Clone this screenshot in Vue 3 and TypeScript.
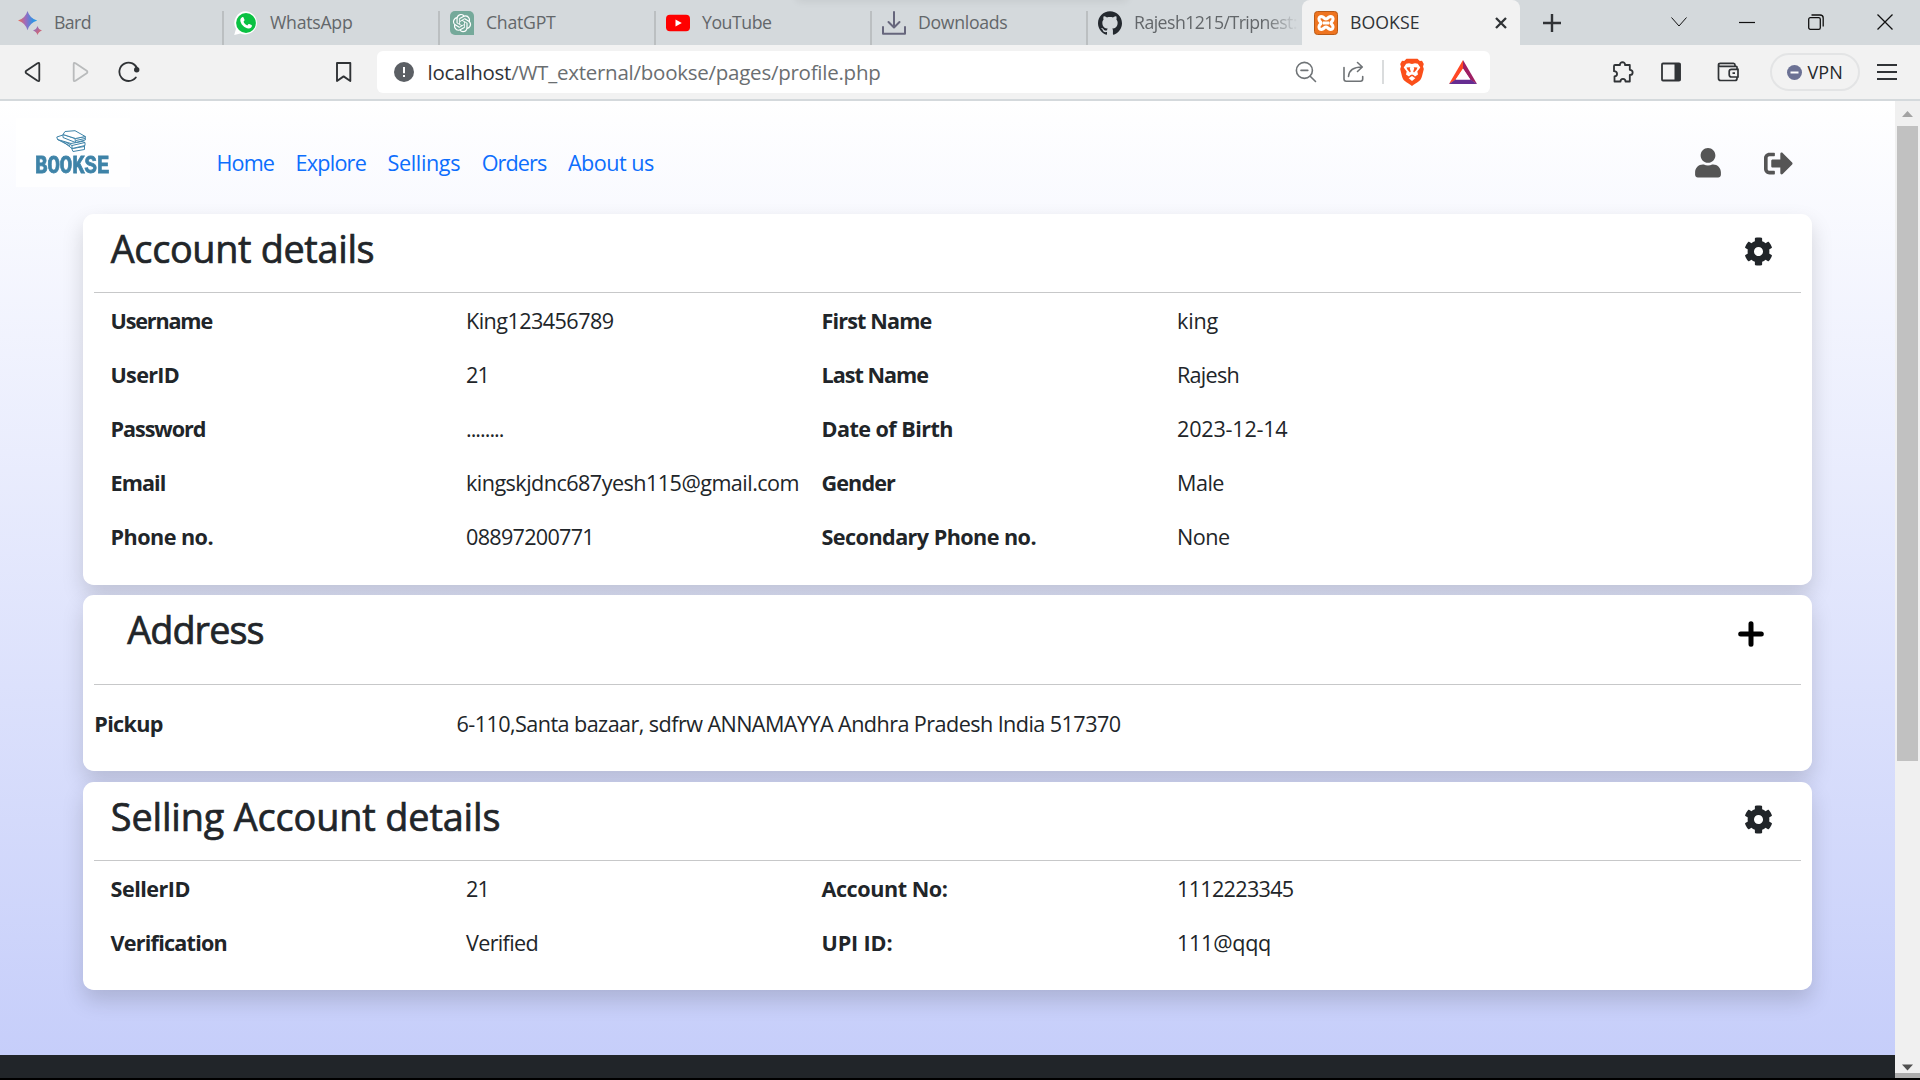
<script setup lang="ts">
import type { Directive } from 'vue'

interface Text {
  text: string
  width: number
}

interface Row {
  cells: Text[]
}

const t = (text: string, width: number): Text => ({ text, width })

// Adjusts tracking so that a label occupies the given measure.
const applyFit = (el: HTMLElement, width: number) => {
  el.style.letterSpacing = '0px'
  const natural = el.getBoundingClientRect().width
  const count = (el.textContent ?? '').length
  if (count > 0) el.style.letterSpacing = `${(width - natural) / count}px`
}

const vFit: Directive<HTMLElement, number> = {
  mounted(el, binding) {
    applyFit(el, binding.value)
    document.fonts.ready.then(() => applyFit(el, binding.value))
  },
}

const links: Text[] = [
  t('Home', 57.5),
  t('Explore', 70.4),
  t('Sellings', 72.5),
  t('Orders', 64.6),
  t('About us', 86),
]

const account: Row[] = [
  { cells: [t('Username', 101.5), t('King123456789', 147.5), t('First Name', 110), t('king', 41)] },
  { cells: [t('UserID', 68.5), t('21', 23), t('Last Name', 106.5), t('Rajesh', 62)] },
  { cells: [t('Password', 95), t('........', 37.5), t('Date of Birth', 131.5), t('2023-12-14', 110.5)] },
  { cells: [t('Email', 55), t('kingskjdnc687yesh115@gmail.com', 333), t('Gender', 73.5), t('Male', 47)] },
  { cells: [t('Phone no.', 102.5), t('08897200771', 128), t('Secondary Phone no.', 214.5), t('None', 52.5)] },
]

const selling: Row[] = [
  { cells: [t('SellerID', 79.5), t('21', 23), t('Account No:', 126), t('1112223345', 116.5)] },
  { cells: [t('Verification', 116.5), t('Verified', 72), t('UPI ID:', 71), t('111@qqq', 94)] },
]

const cog =
  'M487.4 315.7l-42.6-24.6c4.3-23.2 4.3-47 0-70.2l42.6-24.6c4.9-2.8 7.1-8.6 5.5-14-11.1-35.6-30-67.8-54.7-94.6-3.8-4.1-10-5.1-14.8-2.3L380.8 110c-17.9-15.4-38.5-27.3-60.8-35.1V25.8c0-5.6-3.9-10.5-9.4-11.7-36.7-8.2-74.3-7.8-109.2 0-5.5 1.2-9.4 6.1-9.4 11.7V75c-22.2 7.9-42.8 19.8-60.8 35.1L88.7 85.5c-4.9-2.8-11-1.9-14.8 2.3-24.7 26.7-43.6 58.9-54.7 94.6-1.7 5.4.6 11.2 5.5 14L67.3 221c-4.3 23.2-4.3 47 0 70.2l-42.6 24.6c-4.9 2.8-7.1 8.6-5.5 14 11.1 35.6 30 67.8 54.7 94.6 3.8 4.1 10 5.1 14.8 2.3l42.6-24.6c17.9 15.4 38.5 27.3 60.8 35.1v49.2c0 5.6 3.9 10.5 9.4 11.7 36.7 8.2 74.3 7.8 109.2 0 5.5-1.2 9.4-6.1 9.4-11.7v-49.2c22.2-7.9 42.8-19.8 60.8-35.1l42.6 24.6c4.9 2.8 11 1.9 14.8-2.3 24.7-26.7 43.6-58.9 54.7-94.6 1.5-5.5-.7-11.3-5.6-14.1zM256 336c-44.1 0-80-35.9-80-80s35.9-80 80-80 80 35.9 80 80-35.9 80-80 80z'
</script>

<template>
  <div class="window">
    <header class="tabs">
      <div class="tab first">
        <svg class="favicon" viewBox="0 0 24 24">
          <defs>
            <linearGradient id="bard" x1="0" y1="0" x2="1" y2="0">
              <stop offset="0" stop-color="#ee6a50" />
              <stop offset=".4" stop-color="#9a6cc0" />
              <stop offset=".75" stop-color="#3b8de0" />
              <stop offset="1" stop-color="#1fa2e8" />
            </linearGradient>
            <linearGradient id="bard2" x1="0" y1="0" x2="1" y2="1">
              <stop offset="0" stop-color="#7a70d8" />
              <stop offset="1" stop-color="#f06450" />
            </linearGradient>
          </defs>
          <path fill="url(#bard)" d="M9.5 0Q11.7 7.300 19.200 9.600Q11.700 11.900 9.500 19.300Q7.300 11.900 0 9.600Q7.300 7.300 9.500 0Z" />
          <path fill="url(#bard2)" d="M19.500 15Q20.500 18.500 24 19.500Q20.500 20.500 19.500 24Q18.500 20.500 15 19.500Q18.500 18.500 19.500 15Z" />
        </svg>
        <span v-fit="37" class="tab-title">Bard</span>
      </div>
      <div class="tab">
        <svg class="favicon" viewBox="0 0 24 24">
          <path fill="#fff" d="M12 .3A11.600 11.600 0 0 0 2 17.800L.2 24l6.200-1.600A11.600 11.600 0 1 0 12 .3Z" />
          <circle cx="12" cy="12" r="9.900" fill="#0ac142" />
          <path fill="#fff" d="M8.200 6.200c.4-.2 1-.2 1.300.3l1 2.300c.1.400 0 .700-.2 1l-.8 1c.8 1.700 2 2.800 3.800 3.600l1-1.200c.3-.3.600-.4 1-.2l2.200 1.100c.4.200.5.5.4 1-.3 1.600-1.600 2.500-3.200 2.400-4.500-.6-8.200-4.500-8.400-8.300 0-1.300.8-2.400 1.900-3Z" />
        </svg>
        <span v-fit="82.5" class="tab-title">WhatsApp</span>
      </div>
      <div class="tab">
        <svg class="favicon" viewBox="0 0 24 24">
          <path fill="#75a99a" d="M5 0H19A5 5 0 0 1 24 5V24H5A5 5 0 0 1 0 19V5A5 5 0 0 1 5 0Z" />
          <path
            fill="#fff"
            transform="translate(2.900 2.900) scale(.76)"
            d="M22.2819 9.8211a5.9847 5.9847 0 0 0-.5157-4.9108 6.0462 6.0462 0 0 0-6.5098-2.9A6.0651 6.0651 0 0 0 4.9807 4.1818a5.9847 5.9847 0 0 0-3.9977 2.9 6.0462 6.0462 0 0 0 .7427 7.0966 5.98 5.98 0 0 0 .511 4.9107 6.051 6.051 0 0 0 6.5146 2.9001A5.9847 5.9847 0 0 0 13.2599 24a6.0557 6.0557 0 0 0 5.7718-4.2058 5.9894 5.9894 0 0 0 3.9977-2.9001 6.0557 6.0557 0 0 0-.7475-7.0729zm-9.022 12.6081a4.4755 4.4755 0 0 1-2.8764-1.0408l.1419-.0804 4.7783-2.7582a.7948.7948 0 0 0 .3927-.6813v-6.7369l2.02 1.1686a.071.071 0 0 1 .038.052v5.5826a4.504 4.504 0 0 1-4.4945 4.4944zm-9.6607-4.1254a4.4708 4.4708 0 0 1-.5346-3.0137l.142.0852 4.783 2.7582a.7712.7712 0 0 0 .7806 0l5.8428-3.3685v2.3324a.0804.0804 0 0 1-.0332.0615L9.74 19.9502a4.4992 4.4992 0 0 1-6.1408-1.6464zM2.3408 7.8956a4.485 4.485 0 0 1 2.3655-1.9728V11.6a.7664.7664 0 0 0 .3879.6765l5.8144 3.3543-2.0201 1.1685a.0757.0757 0 0 1-.071 0l-4.8303-2.7865A4.504 4.504 0 0 1 2.3408 7.872zm16.5963 3.8558L13.1038 8.364 15.1192 7.2a.0757.0757 0 0 1 .071 0l4.8303 2.7913a4.4944 4.4944 0 0 1-.6765 8.1042v-5.6772a.79.79 0 0 0-.407-.667zm2.0107-3.0231l-.142-.0852-4.7735-2.7818a.7759.7759 0 0 0-.7854 0L9.409 9.2297V6.8974a.0662.0662 0 0 1 .0284-.0615l4.8303-2.7866a4.4992 4.4992 0 0 1 6.6802 4.66zM8.3065 12.863l-2.02-1.1638a.0804.0804 0 0 1-.038-.0567V6.0742a4.4992 4.4992 0 0 1 7.3757-3.4537l-.142.0805L8.704 5.459a.7948.7948 0 0 0-.3927.6813zm1.0976-2.3654l2.602-1.4998 2.6069 1.4998v2.9994l-2.5974 1.4997-2.6067-1.4997Z"
          />
        </svg>
        <span v-fit="69.5" class="tab-title">ChatGPT</span>
      </div>
      <div class="tab">
        <svg class="favicon" viewBox="0 0 24 24">
          <rect x="0" y="3.700" width="24" height="16.600" rx="4" fill="#f00" />
          <path fill="#fff" d="M9.500 8.400L15.800 12L9.500 15.600Z" />
        </svg>
        <span v-fit="69.5" class="tab-title">YouTube</span>
      </div>
      <div class="tab">
        <svg class="favicon" viewBox="0 0 24 24" fill="none" stroke="#66667c" stroke-width="2" stroke-linecap="round" stroke-linejoin="round">
          <path d="M12 1V16M6.500 11L12 16.500L17.500 11M1 16V22.800H23V16" />
        </svg>
        <span v-fit="89.5" class="tab-title">Downloads</span>
      </div>
      <div class="tab">
        <svg class="favicon" viewBox="0 0 24 24">
          <path
            fill="#24292f"
            d="M12 .297c-6.63 0-12 5.373-12 12 0 5.303 3.438 9.8 8.205 11.385.6.113.82-.258.82-.577 0-.285-.01-1.040-.015-2.040-3.338.724-4.042-1.610-4.042-1.610C4.422 18.070 3.633 17.700 3.633 17.700c-1.087-.744.084-.729.084-.729 1.205.084 1.838 1.236 1.838 1.236 1.070 1.835 2.809 1.305 3.495.998.108-.776.417-1.305.76-1.605-2.665-.3-5.466-1.332-5.466-5.930 0-1.310.465-2.380 1.235-3.220-.135-.303-.54-1.523.105-3.176 0 0 1.005-.322 3.300 1.230.96-.267 1.980-.399 3-.405 1.020.006 2.040.138 3 .405 2.280-1.552 3.285-1.230 3.285-1.230.645 1.653.24 2.873.12 3.176.765.84 1.230 1.910 1.230 3.220 0 4.610-2.805 5.625-5.475 5.920.42.36.81 1.096.81 2.220 0 1.606-.015 2.896-.015 3.286 0 .315.21.69.825.57C20.565 22.092 24 17.592 24 12.297c0-6.627-5.373-12-12-12"
          />
        </svg>
        <span class="tab-title faded"><span v-fit="163">Rajesh1215/Tripnest:</span></span>
      </div>
      <div class="tab active">
        <svg class="favicon" viewBox="0 0 24 24">
          <rect x=".5" y=".5" width="23" height="23" rx="3" fill="#ee7420" stroke="#b95a17" />
          <path
            fill="none"
            stroke="#fff"
            stroke-width="3.100"
            stroke-linejoin="round"
            d="M8.200 5.800C5.200 5 4.500 7.500 5.300 9.300C5.900 10.700 7.200 11.200 7.200 12C7.200 12.800 5.900 13.300 5.300 14.700C4.500 16.500 5.200 19 8.200 18.200C10 17.700 10.500 16 12 16C13.500 16 14 17.700 15.800 18.200C18.800 19 19.500 16.500 18.700 14.700C18.100 13.300 16.800 12.800 16.800 12C16.800 11.200 18.100 10.700 18.700 9.300C19.500 7.500 18.800 5 15.800 5.800C14 6.300 13.500 8 12 8C10.500 8 10 6.300 8.200 5.800ZM9 12H15"
          />
        </svg>
        <span v-fit="69.5" class="tab-title">BOOKSE</span>
        <svg class="tab-close" viewBox="0 0 12 12" stroke="#303336" stroke-width="2.300"><path d="M1 1L11 11M11 1L1 11" /></svg>
      </div>
      <svg class="new-tab" viewBox="0 0 18 18" stroke="#303336" stroke-width="2.400"><path d="M9 0V18M0 9H18" /></svg>
      <svg class="win-search" viewBox="0 0 16 16" fill="none" stroke="#111"><path d="M.5 3.500L8 12L15.500 3.500" /></svg>
      <svg class="win-btn" viewBox="0 0 16 16" stroke="#111"><path d="M0 8.500H16" stroke-width="1.200" /></svg>
      <svg class="win-btn" viewBox="0 0 16 16" fill="none" stroke="#111" stroke-width="1.300">
        <rect x=".7" y="3.700" width="11.600" height="11.600" rx="1.600" />
        <path d="M3.500 1H12C14 1 15.200 2.200 15.200 4V12.500" />
      </svg>
      <svg class="win-btn" viewBox="0 0 16 16" stroke="#111" stroke-width="1.300"><path d="M.5 .5L15.500 15.500M15.500 .5L.5 15.500" /></svg>
      <div class="strip-shadow"></div>
    </header>

    <div class="toolbar">
      <svg class="back" width="17" height="22" viewBox="0 0 17 22" fill="none" stroke="#303336" stroke-width="1.800" stroke-linejoin="round">
        <path d="M13.500 2.200Q15.300 1.200 15.300 3V19Q15.300 20.800 13.500 19.800L2.300 12.300Q1 11 2.300 9.700Z" />
      </svg>
      <svg class="forward" width="17" height="22" viewBox="0 0 17 22" fill="none" stroke="#b9bbbc" stroke-width="1.800" stroke-linejoin="round">
        <path d="M3.500 2.200Q1.700 1.200 1.700 3V19Q1.700 20.800 3.500 19.800L14.700 12.300Q16 11 14.700 9.700Z" />
      </svg>
      <svg class="reload" width="22" height="22" viewBox="0 0 22 22">
        <path d="M19.500 8.500A9.200 9.200 0 1 0 17.800 16.500" fill="none" stroke="#303336" stroke-width="1.800" stroke-linecap="round" />
        <circle cx="18.700" cy="8.800" r="2.700" fill="#303336" />
      </svg>
      <svg class="bookmark" width="17" height="22" viewBox="0 0 17 22" fill="none" stroke="#303336" stroke-width="1.900" stroke-linejoin="round">
        <path d="M2 2H15.300V20L8.600 15.400L2 20Z" />
      </svg>
      <div class="address">
        <svg class="info" width="20" height="20" viewBox="0 0 20 20">
          <circle cx="10" cy="10" r="10" fill="#5b5f64" />
          <path d="M10 5V11.200M10 13V15" stroke="#fff" stroke-width="2" />
        </svg>
        <span class="url"><span v-fit="453"><span class="host">localhost</span>/WT_external/bookse/pages/profile.php</span></span>
        <svg class="zoom-out" width="22" height="22" viewBox="0 0 22 22" fill="none" stroke="#6f7376" stroke-width="1.600" stroke-linecap="round">
          <circle cx="9.400" cy="9.400" r="8" />
          <path d="M15.200 15.200L20.500 20.500M6 9.400H12.800" />
        </svg>
        <svg class="share" width="23" height="22" viewBox="0 0 23 22" fill="none" stroke="#6f7376" stroke-width="1.600" stroke-linecap="round" stroke-linejoin="round">
          <path d="M2 6.500V18Q2 20.200 4.200 20.200H18.500Q20.700 20.200 20.700 18V15.500M6.500 15.500C7 9 11 6 20 6M15.500 1.500L20.300 6L15.500 10.500" />
        </svg>
        <div class="split"></div>
        <svg class="brave" width="24" height="28" viewBox="0 0 24 28">
          <path fill="#fb4f1a" d="M6.500 .8H17.500L19.800 3L22 2.800L23.800 6L23 8.500L23.800 11C22 18 21.800 20.500 19.500 22.800C17 25 14 26.500 12 27.900C10 26.500 7 25 4.500 22.800C2.200 20.500 2 18 .2 11L1 8.500L.2 6L2 2.800L4.200 3Z" />
          <path fill="#fff" d="M12 6L15 5.200L17.800 5.800L20.300 9.500L17.300 13.500L18 16.500L15 18.500L13.800 17.300L12 16.500L10.200 17.300L9 18.500L6 16.500L6.700 13.500L3.700 9.500L6.200 5.800L9 5.200Z" />
          <path fill="#fb4f1a" d="M6.500 9.500L10.300 9.300L9.800 10.500L10.800 13.500L10 14.500L7.500 11.800ZM17.500 9.500L13.700 9.300L14.200 10.500L13.200 13.500L14 14.500L16.500 11.800Z" />
          <path fill="#fff" d="M12 18L15.300 20.200L12 23L8.700 20.200Z" />
        </svg>
        <svg class="bat" width="28" height="25" viewBox="0 0 28 25">
          <path fill="#ff4724" d="M14 0V9L6.500 20L0 24Z" />
          <path fill="#9e1f63" d="M14 0V9L21.500 20L28 24Z" />
          <path fill="#662d91" d="M0 24L6.500 19.500H21.500L28 24Z" />
          <path fill="#fff" d="M14 8.500L21.300 19.500H6.700Z" />
        </svg>
      </div>
      <svg class="puzzle" width="22" height="22" viewBox="0 0 22 22" fill="none" stroke="#303336" stroke-width="1.800" stroke-linejoin="round">
        <path d="M3 4H8C7.500 .3 13.500 .3 13 4H17.800V8.800C21.600 8.800 21.600 14 17.800 14V20.500H13.500C13.500 17 8.500 17 8.500 20.500H2.500V15.500C6 15 6 10.500 2 10.200V5Q2 4 3 4Z" />
      </svg>
      <svg class="sidebar" width="20" height="20" viewBox="0 0 20 20">
        <rect x="1" y="1.500" width="18" height="17" rx="1" fill="none" stroke="#303336" stroke-width="1.800" />
        <rect x="13.500" y="1.500" width="6" height="17" fill="#303336" />
      </svg>
      <svg class="wallet" width="22" height="20" viewBox="0 0 22 20" fill="none" stroke="#303336" stroke-width="1.700">
        <path d="M20 7V5Q20 4.300 19 4.300H3Q1.500 4.300 1.500 3Q1.500 1.300 3.300 1.300H16.500Q18 1.300 18 3V4M1.500 3V16.200Q1.500 18.500 3.700 18.500H18Q20 18.500 20 16.500V15.500M21 7.300H14.500Q12.200 7.300 12.200 9.500V12.500Q12.200 15 14.500 15H21ZM15.500 11.200H18" />
      </svg>
      <div class="vpn">
        <svg width="15" height="15" viewBox="0 0 15 15"><circle cx="7.500" cy="7.500" r="7.500" fill="#6b7194" /><path d="M3.500 7.500H11.500" stroke="#fff" stroke-width="2" /></svg>
        <span v-fit="35.5">VPN</span>
      </div>
      <svg class="menu" width="22" height="18" viewBox="0 0 22 18" stroke="#303336" stroke-width="1.800"><path d="M1 2H21M1 9H21M1 16H21" /></svg>
    </div>

    <div class="viewport">
      <main class="page">
        <nav class="navbar">
          <div class="logo">
            <svg class="books" width="30" height="23" viewBox="0 0 30 23" fill="#fff" stroke="#3e83a8" stroke-width="1" stroke-linejoin="round">
              <path d="M14 14.500L17 21.500L28.500 19.500V13.500ZM16.500 18.500L28.500 16.500" />
              <path d="M3 8.500L16 18.500L29 15.500V12.500L10 6ZM16 15.500L29 12.500M16 15.500V18.500M3 8.500L16 15.500" />
              <path d="M.8 7L7 5L26 11.500L15 13.500L1.500 9.500ZM1.500 9.500L14 16" />
              <path d="M7 4.500V7.500L19.500 12.500L29.300 10V6.500L19 8.500ZM19 8.500L19.500 12.500M20 10.500L29 8.500" />
              <path d="M7 4.500L9 1.500L19 .7L29.300 6.500L19.500 8.500Z" />
            </svg>
            <span class="wordmark">BOOKSE</span>
          </div>
          <div class="links">
            <a v-for="link in links" :key="link.text" v-fit="link.width">{{ link.text }}</a>
          </div>
          <svg class="user" width="26" height="29.500" viewBox="0 0 448 512">
            <path d="M224 256c70.7 0 128-57.3 128-128S294.7 0 224 0 96 57.3 96 128s57.3 128 128 128zm89.6 32h-16.7c-22.2 10.2-46.9 16-72.9 16s-50.6-5.8-72.9-16h-16.7C60.2 288 0 348.2 0 422.4V464c0 26.5 21.5 48 48 48h352c26.5 0 48-21.5 48-48v-41.6c0-74.2-60.2-134.4-134.4-134.4z" />
          </svg>
          <svg class="logout" width="29" height="29" viewBox="0 0 512 512">
            <path d="M497 273L329 441c-15 15-41 4.5-41-17v-96H152c-13.3 0-24-10.7-24-24v-96c0-13.3 10.7-24 24-24h136V88c0-21.4 25.9-32 41-17l168 168c9.3 9.4 9.3 24.6 0 34zM192 436v-40c0-6.6-5.4-12-12-12H96c-17.700 0-32-14.300-32-32V160c0-17.700 14.300-32 32-32h84c6.600 0 12-5.400 12-12V76c0-6.600-5.400-12-12-12H96c-53 0-96 43-96 96v192c0 53 43 96 96 96h84c6.600 0 12-5.400 12-12z" />
          </svg>
        </nav>

        <section class="card account">
          <div class="card-head">
            <h3><span v-fit="263.5">Account details</span></h3>
            <svg class="cog" width="29" height="29" viewBox="0 0 512 512"><path :d="cog" /></svg>
          </div>
          <div v-for="(row, i) in account" :key="i" class="row">
            <div v-for="(cell, j) in row.cells" :key="j" class="cell"><span v-fit="cell.width">{{ cell.text }}</span></div>
          </div>
        </section>

        <section class="card pickup">
          <div class="card-head">
            <h3><span v-fit="136.5">Address</span></h3>
            <svg class="plus" width="26" height="26" viewBox="0 0 26 26"><path d="M13 2.700V23.300M2.700 13H23.300" stroke="#000" stroke-width="5" stroke-linecap="round" /></svg>
          </div>
          <div class="row">
            <div class="cell"><span v-fit="68.5">Pickup</span></div>
            <div class="cell"><span v-fit="664">6-110,Santa bazaar, sdfrw ANNAMAYYA Andhra Pradesh India 517370</span></div>
          </div>
        </section>

        <section class="card selling">
          <div class="card-head">
            <h3><span v-fit="389.5">Selling Account details</span></h3>
            <svg class="cog" width="29" height="29" viewBox="0 0 512 512"><path :d="cog" /></svg>
          </div>
          <div v-for="(row, i) in selling" :key="i" class="row">
            <div v-for="(cell, j) in row.cells" :key="j" class="cell"><span v-fit="cell.width">{{ cell.text }}</span></div>
          </div>
        </section>
        <footer class="footer"></footer>
      </main>
      <aside class="scrollbar">
        <svg width="25" height="25" viewBox="0 0 25 25"><path d="M7 16L12.500 10L18 16Z" fill="#a3a3a3" /></svg>
        <div class="thumb"></div>
        <svg class="down" width="25" height="25" viewBox="0 0 25 25"><path d="M7 10.500H18L12.500 16.500Z" fill="#505050" /></svg>
        <div class="corner"></div>
      </aside>
    </div>
    <div class="edge"></div>
  </div>
</template>

<style>
html,
body {
  margin: 0;
  overflow: hidden;
  background: #000;
}
</style>

<style scoped>
.window {
  box-sizing: border-box;
  width: 1920px;
  height: 1080px;
  display: flex;
  flex-direction: column;
  font-family: 'Open Sans', 'Noto Sans', sans-serif;
  white-space: nowrap;
  overflow: hidden;
}
.window svg {
  flex: none;
  display: block;
}
.window span {
  flex: none;
}
.tabs {
  position: relative;
  flex: none;
  height: 45px;
  display: flex;
  align-items: center;
  background: #d4d9dc;
}
.tab {
  flex: none;
  box-sizing: border-box;
  width: 216px;
  height: 45px;
  display: flex;
  align-items: center;
  font-size: 17.7px;
  line-height: 42px;
  color: #63676a;
}
.tab::before {
  content: '';
  width: 2px;
  height: 34px;
  margin-right: 10px;
  align-self: flex-end;
  background: #bbbfc1;
}
.tab.first {
  width: 222px;
  padding-left: 18px;
}
.tab.first::before,
.tab.active::before {
  display: none;
}
.tab.active {
  width: 217.5px;
  padding-left: 12px;
  background: #f2f2f2;
  border-radius: 8px 8px 0 0;
  color: #303336;
}
.favicon {
  width: 24px;
  height: 24px;
  margin-right: 12px;
}
.tab-title {
  height: 44px;
}
.faded {
  mask-image: linear-gradient(90deg, #000 130px, transparent 164px);
}
.tab-close {
  width: 12px;
  height: 12px;
  margin-left: auto;
  margin-right: 12.5px;
}
.new-tab {
  width: 18px;
  height: 18px;
  margin-left: 23.5px;
}
.win-search {
  width: 16px;
  height: 16px;
  margin-left: 109.500px;
  margin-top: -2px;
}
.win-btn {
  width: 16px;
  height: 16px;
  margin-left: 52.900px;
  margin-top: -2px;
}
.strip-shadow {
  position: absolute;
  left: 800px;
  top: -12px;
  width: 324px;
  height: 10px;
  box-shadow: 0 0 8px 3px rgba(0, 0, 0, 0.08);
}
.toolbar {
  box-sizing: border-box;
  flex: none;
  height: 56px;
  display: flex;
  align-items: center;
  background: #f2f2f2;
  border-bottom: 2px solid #d4d9dc;
}
.back {
  margin-left: 24px;
}
.forward {
  margin-left: 31px;
}
.reload {
  margin-left: 29px;
}
.bookmark {
  margin-left: 195px;
}
.address {
  box-sizing: border-box;
  width: 1113px;
  height: 42px;
  margin-left: 25px;
  padding: 0 13px 0 17px;
  display: flex;
  align-items: center;
  background: #fff;
  border-radius: 6px;
}
.url {
  margin-left: 13.5px;
  font-size: 20.5px;
  line-height: 42px;
  color: #6a6e71;
}
.host {
  color: #303336;
}
.zoom-out {
  margin-left: auto;
}
.share {
  margin-left: 25px;
}
.split {
  width: 2px;
  height: 24px;
  margin-left: 17px;
  background: #dadcdd;
}
.brave {
  margin-left: 16px;
}
.bat {
  margin-left: 25px;
}
.puzzle {
  margin-left: 121.5px;
}
.sidebar {
  margin-left: 27px;
}
.wallet {
  margin-left: 36.5px;
}
.vpn {
  box-sizing: border-box;
  width: 90px;
  height: 38px;
  margin-left: 31px;
  padding-left: 14.5px;
  display: flex;
  align-items: center;
  gap: 6px;
  border: 2px solid #e3e4e5;
  border-radius: 19px;
  font-size: 18px;
  line-height: 34px;
  color: #25282b;
}
.menu {
  margin-left: 16px;
}
.viewport {
  flex: 1;
  min-height: 0;
  display: flex;
}
.page {
  width: 1895px;
  height: 977px;
  display: flex;
  flex-direction: column;
  background: linear-gradient(180deg, #fff 0, #c6cefa 954px);
  color: #212529;
  font-size: 21.6px;
}
.navbar {
  flex: none;
  height: 113px;
  box-sizing: border-box;
  display: flex;
  align-items: center;
  padding: 0 102.5px 0 16px;
}
.logo {
  box-sizing: border-box;
  width: 114px;
  height: 69px;
  margin: -10px 86.5px 0 0;
  padding-top: 11.5px;
  background: rgba(255, 255, 255, 0.75);
}
.books {
  margin-left: 40px;
}
.wordmark {
  display: block;
  width: max-content;
  margin: -1.500px 0 0 18.500px;
  font-family: 'Liberation Mono', monospace;
  font-weight: 700;
  font-size: 25.500px;
  line-height: 32px;
  color: #3e83a8;
  -webkit-text-stroke: 0.8px #3e83a8;
  transform: scaleX(0.81);
  transform-origin: 0 50%;
}
.links {
  display: flex;
  gap: 21.6px;
  line-height: 54px;
  margin-top: 10px;
}
.links a {
  color: #0d6efd;
}
.user {
  margin-left: auto;
  margin-top: 11px;
  fill: #555;
}
.logout {
  margin-left: 43px;
  margin-top: 11px;
  fill: #555;
}
.card {
  flex: none;
  box-sizing: border-box;
  width: 1729px;
  margin-left: 83px;
  padding: 0 11px;
  background: #fff;
  border-radius: 10.8px;
  box-shadow: 0 10.8px 21.6px rgba(0, 0, 0, 0.15);
}
.account {
  height: 371px;
}
.pickup {
  height: 176px;
  margin-top: 10px;
}
.selling {
  height: 208px;
  margin-top: 11px;
}
.card-head {
  box-sizing: border-box;
  height: 79px;
  display: flex;
  align-items: flex-start;
  justify-content: space-between;
  padding: 0 28px 0 16.8px;
  border-bottom: 1px solid #c7c8c9;
}
h3 {
  margin: 0;
  font-size: 37.8px;
  font-weight: 500;
  line-height: 70px;
  -webkit-text-stroke: 0.7px #212529;
}
.cog {
  margin-top: 23px;
  fill: #212529;
}
.pickup .card-head {
  height: 90px;
  padding: 0 37.500px 0 33.200px;
}
.plus {
  margin-top: 26px;
}
.row {
  display: flex;
  height: 54px;
  line-height: 55px;
  padding-left: 16.5px;
}
.cell {
  flex: none;
  width: 355.5px;
}
.cell:nth-child(odd) {
  font-weight: 700;
}
.pickup .row {
  padding: 11px 0 0 0.300px;
}
.pickup .cell {
  width: 362.200px;
}
.footer {
  flex: none;
  height: 23px;
  margin-top: 65px;
  background: #212529;
}
.scrollbar {
  position: relative;
  width: 25px;
  display: flex;
  flex-direction: column;
  background: #f0f0f0;
}
.thumb {
  height: 635px;
  margin: 0 2px;
  background: #c1c1c1;
}
.down {
  margin-top: auto;
  margin-bottom: -1px;
}
.corner {
  position: absolute;
  left: 0;
  right: 0;
  bottom: 0;
  height: 5px;
  background: #adadad;
}
.edge {
  flex: none;
  height: 2px;
  background: #000;
}
</style>
